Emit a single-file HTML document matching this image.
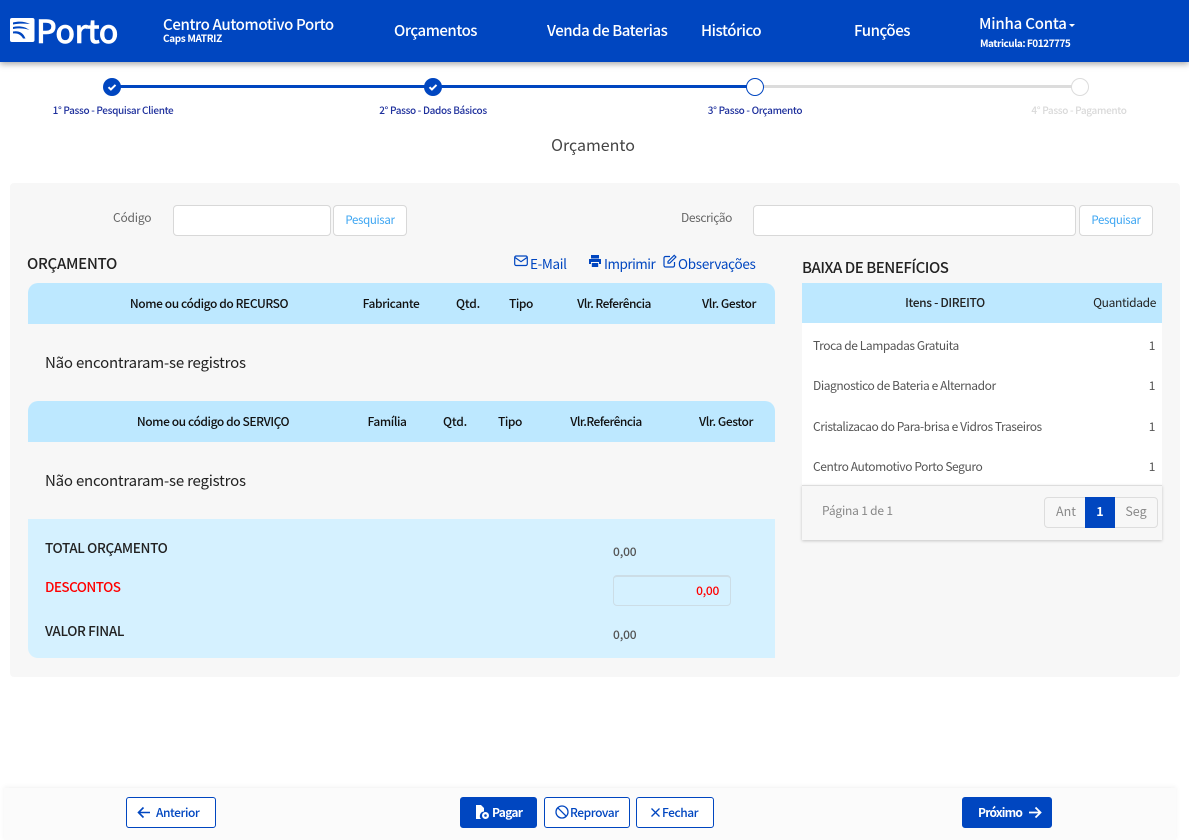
<!DOCTYPE html>
<html lang="pt"><head><meta charset="utf-8"><title>Orçamento</title>
<style>
*{box-sizing:border-box}
html,body{margin:0;padding:0;width:1189px;height:840px;overflow:hidden;background:#fff}
body{position:relative;font-family:"Noto Sans CJK SC","Liberation Sans",sans-serif;color:#333}
.a{position:absolute}
.t{position:absolute;white-space:nowrap;line-height:20px;height:20px;margin-top:-10px}
.c{transform:translateX(-50%)}
.r{transform:translateX(-100%)}
.w{color:#fff}
.b{font-weight:500}
.nav{font-size:15px;font-weight:500;letter-spacing:-.45px;color:#fff}
.h{font-size:12px;font-weight:500;color:#111;letter-spacing:-.42px}
.s{font-size:10px;color:#1d2f9c;letter-spacing:-.33px;font-weight:500}
.i{font-size:12px;color:#555;letter-spacing:-.42px}
.n{font-size:12px;color:#555;letter-spacing:-.15px;font-weight:500}
.tot{font-size:13.5px;font-weight:500;letter-spacing:-.45px;color:#222}
.lnk{font-size:13.5px;color:#0046c0;letter-spacing:-.35px}
.pq{font-size:11.5px;color:#3ea6f2;letter-spacing:-.35px}
.bt{font-size:12px;font-weight:500;letter-spacing:-.45px;color:#0046c0}
.btn{position:absolute;top:797px;height:31px;border:1px solid #0046c0;border-radius:3px;background:#fff}
.fill{background:#0046c0}
.inp{position:absolute;background:#fff;border:1px solid #d8d8d8;border-radius:4px}
</style></head><body>

<div class="a" style="left:0;top:0;width:1189px;height:62px;background:#0046c0;box-shadow:0 2px 6px rgba(0,0,0,.35)"></div>
<svg class="a" style="left:10px;top:18px" width="25" height="24" viewBox="0 0 25 24"><rect width="24.500" height="24" rx="2" fill="#fff"/><path d="M3 4.500C9 3 15 3.500 20 6 14 5.500 8 5.500 3 6.500ZM3 9C9 7.500 15 8.500 19.500 12 14 10 8 10 3 11ZM3 13.500C8 12.500 13 14 15.500 20.500H13C11 16.500 7 15 3 15.500Z" fill="#0046c0"/></svg>
<div class="t w" style="left:36px;top:30px;font-size:32px;font-weight:500;line-height:32px;height:32px;margin-top:-16px;letter-spacing:-.5px;-webkit-text-stroke:.5px #fff">Porto</div>
<div class="t nav" style="left:163px;top:25px;letter-spacing:-.36px">Centro Automotivo Porto</div>
<div class="t w" style="left:163px;top:38px;font-size:10px;font-weight:700;letter-spacing:-.35px">Caps MATRIZ</div>
<div class="t nav" style="left:394px;top:31px">Orçamentos</div>
<div class="t nav" style="left:547px;top:31px">Venda de Baterias</div>
<div class="t nav" style="left:701px;top:31px">Histórico</div>
<div class="t nav" style="left:854px;top:31px">Funções</div>
<div class="t nav" style="left:979px;top:24px;letter-spacing:-.2px">Minha Conta</div>
<div class="a" style="left:1069px;top:24px;border:3px solid transparent;border-top-color:#fff;border-bottom:0"></div>
<div class="t w" style="left:980px;top:43px;font-size:10px;font-weight:700;letter-spacing:-.47px">Matricula: F0127775</div>

<div class="a" style="left:112px;top:85px;width:643px;height:3px;background:#0046c0"></div>
<div class="a" style="left:755px;top:85px;width:325px;height:3px;background:#dcdcdc"></div>
<svg class="a" style="left:103px;top:78px" width="18" height="18" viewBox="0 0 18 18"><circle cx="9" cy="9" r="9" fill="#0046c0"/><path d="M5.500 9.200l2.400 2.300 4.600-4.600" fill="none" stroke="#fff" stroke-width="2"/></svg>
<svg class="a" style="left:424px;top:78px" width="18" height="18" viewBox="0 0 18 18"><circle cx="9" cy="9" r="9" fill="#0046c0"/><path d="M5.500 9.200l2.400 2.300 4.600-4.600" fill="none" stroke="#fff" stroke-width="2"/></svg>
<div class="a" style="left:746px;top:78px;width:18px;height:18px;border-radius:50%;background:#fff;border:1.500px solid #0046c0"></div>
<div class="a" style="left:1071px;top:78px;width:18px;height:18px;border-radius:50%;background:#fff;border:1.500px solid #dcdcdc"></div>
<div class="t s c" style="left:113px;top:110px">1° Passo - Pesquisar Cliente</div>
<div class="t s c" style="left:433px;top:110px">2° Passo - Dados Básicos</div>
<div class="t s c" style="left:755px;top:110px">3° Passo - Orçamento</div>
<div class="t s c" style="left:1079px;top:110px;color:#d9d9d9">4° Passo - Pagamento</div>
<div class="t c" style="left:593px;top:144px;font-size:16px;color:#444">Orçamento</div>

<div class="a" style="left:10px;top:183px;width:1170px;height:494px;background:#f7f7f7;border-radius:4px"></div>
<div class="t" style="left:113px;top:218px;font-size:12px;color:#666;letter-spacing:-.2px">Código</div>
<div class="inp" style="left:173px;top:205px;width:158px;height:31px"></div>
<div class="inp" style="left:333px;top:205px;width:74px;height:31px"></div>
<div class="t c pq" style="left:370px;top:220px">Pesquisar</div>
<div class="t" style="left:681px;top:218px;font-size:12px;color:#666;letter-spacing:-.4px">Descrição</div>
<div class="inp" style="left:753px;top:205px;width:323px;height:31px"></div>
<div class="inp" style="left:1079px;top:205px;width:74px;height:31px"></div>
<div class="t c pq" style="left:1116px;top:220px">Pesquisar</div>

<div class="t b" style="left:27px;top:264px;font-size:15px;color:#222;letter-spacing:-.3px">ORÇAMENTO</div>
<svg class="a" style="left:514px;top:255px" width="14" height="12" viewBox="0 0 14 12" fill="none" stroke="#0046c0" stroke-width="1.200"><rect x=".7" y="1" width="12.600" height="9.500" rx="1.500"/><path d="M1 2.500l6 4.200 6-4.200"/></svg>
<div class="t lnk" style="left:530px;top:263px">E-Mail</div>
<svg class="a" style="left:588px;top:254px" width="14" height="14" viewBox="0 0 14 14" fill="#0046c0"><path d="M3 1h8v3.500H3zM1 5h12v5h-2V8H3v2H1z"/><rect x="3.800" y="9" width="6.400" height="4"/></svg>
<div class="t lnk" style="left:604px;top:263px;letter-spacing:-.5px">Imprimir</div>
<svg class="a" style="left:663px;top:254px" width="14" height="14" viewBox="0 0 14 14" fill="none" stroke="#0046c0" stroke-width="1.200"><path d="M11.500 8v3.500a1.500 1.500 0 0 1-1.500 1.500H2.500A1.500 1.500 0 0 1 1 11.500V4a1.500 1.500 0 0 1 1.500-1.500H7"/><path d="M5 9.200V7.500L11.200 1.300 12.900 3 6.700 9.200z"/></svg>
<div class="t lnk" style="left:678px;top:263px;letter-spacing:-.28px">Observações</div>

<div class="a" style="left:28px;top:283px;width:747px;height:41px;background:#bde8ff;border-radius:10px 10px 0 0"></div>
<div class="t h c" style="left:209px;top:304px">Nome ou código do RECURSO</div>
<div class="t h c" style="left:391px;top:304px">Fabricante</div>
<div class="t h c" style="left:468px;top:304px;letter-spacing:-.2px">Qtd.</div>
<div class="t h c" style="left:521px;top:304px">Tipo</div>
<div class="t h c" style="left:614px;top:304px;letter-spacing:-.55px">Vlr. Referência</div>
<div class="t h c" style="left:729px;top:304px">Vlr. Gestor</div>
<div class="t" style="left:45px;top:363px;font-size:15px;color:#222;letter-spacing:-.2px">Não encontraram-se registros</div>

<div class="a" style="left:28px;top:401px;width:747px;height:41px;background:#bde8ff;border-radius:10px 10px 0 0"></div>
<div class="t h c" style="left:213px;top:422px">Nome ou código do SERVIÇO</div>
<div class="t h c" style="left:387px;top:422px">Família</div>
<div class="t h c" style="left:455px;top:422px;letter-spacing:-.2px">Qtd.</div>
<div class="t h c" style="left:510px;top:422px">Tipo</div>
<div class="t h c" style="left:606px;top:422px;letter-spacing:-.55px">Vlr.Referência</div>
<div class="t h c" style="left:726px;top:422px">Vlr. Gestor</div>
<div class="t" style="left:45px;top:481px;font-size:15px;color:#222;letter-spacing:-.2px">Não encontraram-se registros</div>

<div class="a" style="left:28px;top:519px;width:747px;height:139px;background:#d5f1ff;border-radius:0 0 0 10px"></div>
<div class="t tot" style="left:45px;top:547px;letter-spacing:-.35px">TOTAL ORÇAMENTO</div>
<div class="t n" style="left:613px;top:552px">0,00</div>
<div class="t tot" style="left:45px;top:586px;color:#f00;letter-spacing:-.55px">DESCONTOS</div>
<div class="a" style="left:613px;top:575px;width:118px;height:31px;border:1px solid #ccdde6;border-top-width:2px;border-radius:4px"></div>
<div class="t r" style="left:719px;top:591px;font-size:12px;color:#f00;font-weight:500;letter-spacing:-.3px">0,00</div>
<div class="t tot" style="left:45px;top:630px;letter-spacing:-.36px">VALOR FINAL</div>
<div class="t n" style="left:613px;top:635px">0,00</div>

<div class="t b" style="left:802px;top:268px;font-size:15px;color:#222;letter-spacing:-.47px">BAIXA DE BENEFÍCIOS</div>
<div class="a" style="left:802px;top:323px;width:360px;height:163px;background:#fff"></div>
<div class="a" style="left:802px;top:283px;width:360px;height:40px;background:#bde8ff"></div>
<div class="t h c" style="left:945px;top:303px;color:#222;letter-spacing:-.35px">Itens - DIREITO</div>
<div class="t r" style="left:1156px;top:303px;font-size:12px;color:#222;letter-spacing:-.35px">Quantidade</div>
<div class="t i" style="left:813px;top:346px">Troca de Lampadas Gratuita</div><div class="t i r" style="left:1155px;top:346px">1</div>
<div class="t i" style="left:813px;top:386px">Diagnostico de Bateria e Alternador</div><div class="t i r" style="left:1155px;top:386px">1</div>
<div class="t i" style="left:813px;top:427px">Cristalizacao do Para-brisa e Vidros Traseiros</div><div class="t i r" style="left:1155px;top:427px">1</div>
<div class="t i" style="left:813px;top:467px">Centro Automotivo Porto Seguro</div><div class="t i r" style="left:1155px;top:467px">1</div>
<div class="a" style="left:802px;top:485px;width:360px;height:55px;background:#f7f7f7;border-top:1px solid #ddd;box-shadow:0 1px 3px rgba(0,0,0,.2)"></div>
<div class="t" style="left:822px;top:511px;font-size:12px;color:#888;letter-spacing:-.2px">Página 1 de 1</div>
<div class="a" style="left:1044px;top:497px;width:114px;height:31px;border:1px solid #ddd;border-radius:4px"></div>
<div class="a" style="left:1085px;top:497px;width:30px;height:31px;background:#0046c0"></div>
<div class="t c" style="left:1066px;top:511px;font-size:12.500px;color:#888">Ant</div>
<div class="t c w" style="left:1100px;top:511px;font-size:12.500px;font-weight:700">1</div>
<div class="t c" style="left:1136px;top:511px;font-size:12.500px;color:#888">Seg</div>

<div class="a" style="left:4px;top:788px;width:1172px;height:52px;background:#fbfbfb;box-shadow:0 -1px 5px rgba(0,0,0,.06)"></div>
<div class="btn" style="left:126px;width:90px"></div>
<svg class="a" style="left:137px;top:806px" width="14" height="13" viewBox="0 0 14 13" fill="none" stroke="#0046c0" stroke-width="1.600"><path d="M13 6.500H2M6.500 1.500L1.500 6.500l5 5"/></svg>
<div class="t bt" style="left:156px;top:813px">Anterior</div>
<div class="btn fill" style="left:460px;width:77px"></div>
<svg class="a" style="left:475px;top:805px" width="15" height="15" viewBox="0 0 15 15" fill="#fff"><path d="M1 0h5l3 3v3.500a4.500 4.500 0 0 0-3 7.500H1z"/><circle cx="10.500" cy="10.500" r="3.500"/><circle cx="10.500" cy="10.500" r="1.300" fill="#0046c0"/></svg>
<div class="t w" style="left:492px;top:813px;font-size:12px;font-weight:700;letter-spacing:-.7px">Pagar</div>
<div class="btn" style="left:544px;width:86px"></div>
<svg class="a" style="left:555px;top:805px" width="14" height="14" viewBox="0 0 14 14" fill="none" stroke="#0046c0" stroke-width="1.300"><circle cx="7" cy="7" r="6"/><path d="M2.800 2.800l8.400 8.400"/></svg>
<div class="t bt" style="left:570px;top:813px">Reprovar</div>
<div class="btn" style="left:636px;width:78px"></div>
<svg class="a" style="left:650px;top:807px" width="11" height="11" viewBox="0 0 11 11" fill="none" stroke="#0046c0" stroke-width="1.300"><path d="M1.500 1.500l8 8M9.500 1.500l-8 8"/></svg>
<div class="t bt" style="left:662px;top:813px">Fechar</div>
<div class="btn fill" style="left:962px;width:90px"></div>
<div class="t w" style="left:978px;top:813px;font-size:12px;font-weight:700;letter-spacing:-.8px">Próximo</div>
<svg class="a" style="left:1028px;top:806px" width="14" height="13" viewBox="0 0 14 13" fill="none" stroke="#fff" stroke-width="1.800"><path d="M1 6.500h11M7.500 1.500l5 5-5 5"/></svg>
</body></html>
